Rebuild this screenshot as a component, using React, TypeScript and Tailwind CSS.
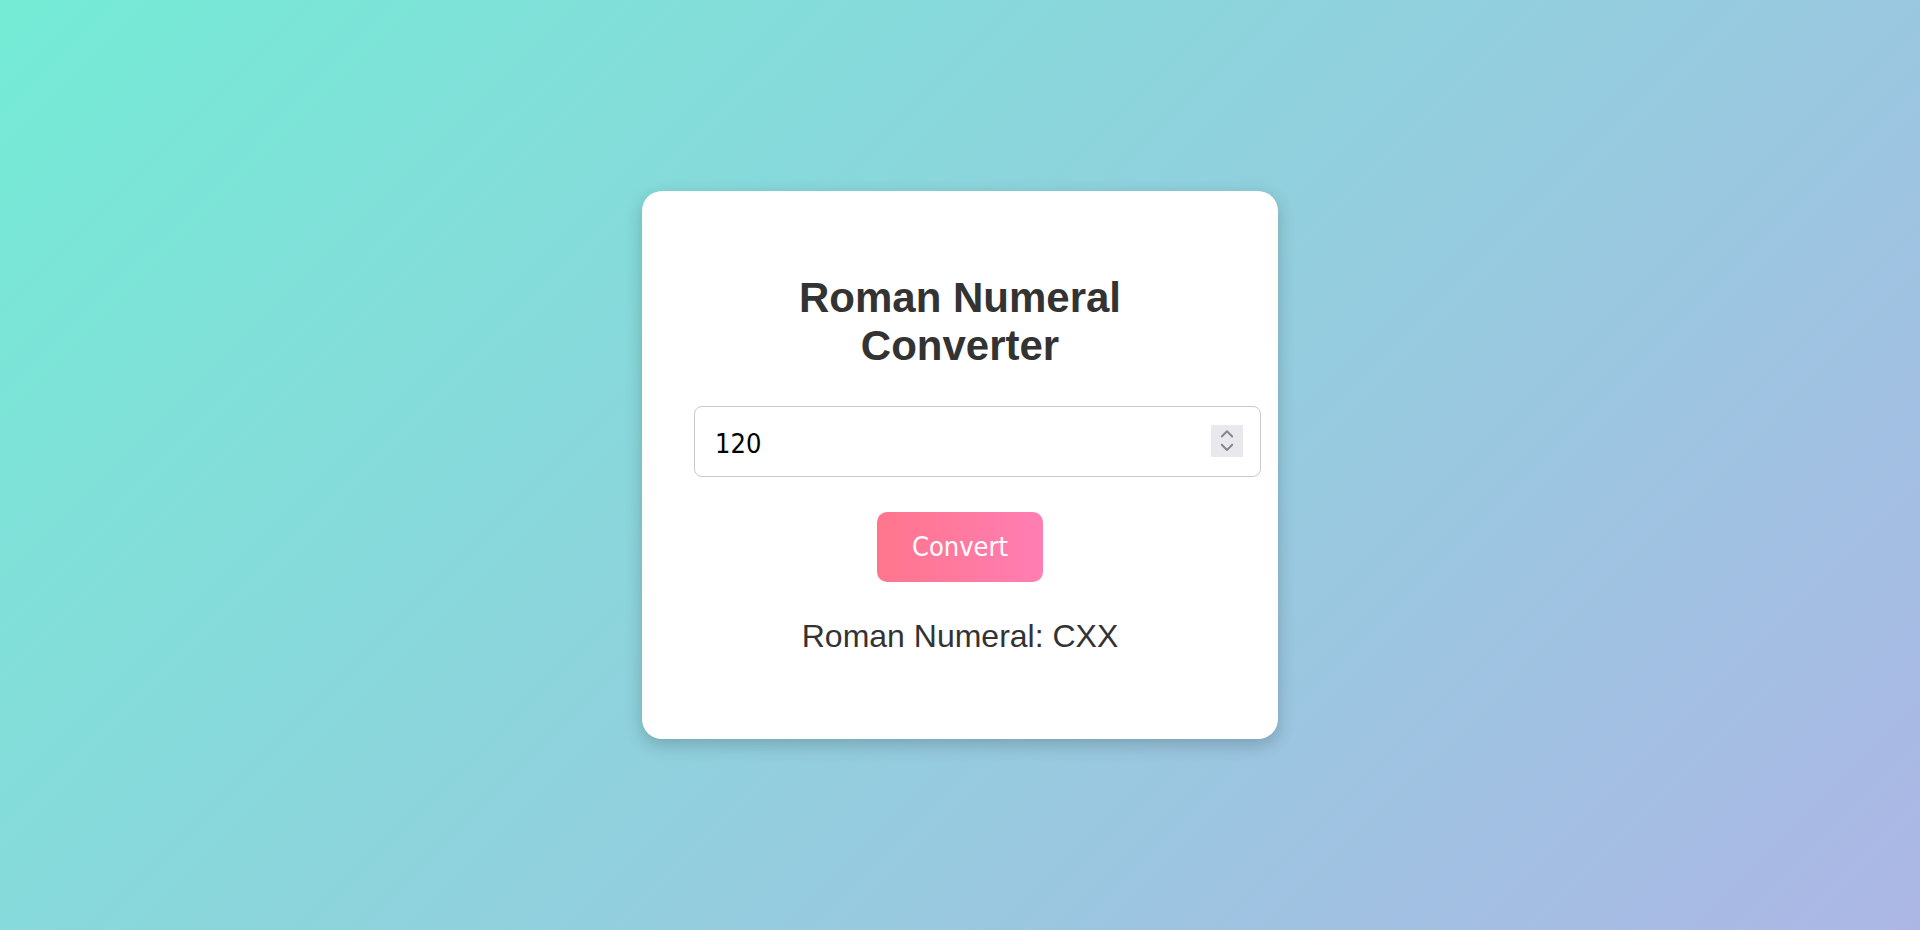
import React, { useState } from 'react';

const toRoman = (n: number) => {
  const table: [number, string][] = [
    [1000, 'M'], [900, 'CM'], [500, 'D'], [400, 'CD'],
    [100, 'C'], [90, 'XC'], [50, 'L'], [40, 'XL'],
    [10, 'X'], [9, 'IX'], [5, 'V'], [4, 'IV'], [1, 'I'],
  ];
  let out = '';
  for (const [v, s] of table) {
    while (n >= v) {
      out += s;
      n -= v;
    }
  }
  return out;
};

const Spinner: React.FC = () => (
  <div className="absolute right-[18px] top-[19px] w-[32px] h-[32px] bg-[#e9e9ed] pointer-events-none">
    <svg width="32" height="32" viewBox="0 0 32 32" fill="none">
      <path d="M10.8 11.5 L16 6.3 L21.2 11.5" stroke="#86868f" strokeWidth="2" strokeLinecap="round" strokeLinejoin="round" />
      <path d="M10.8 19.8 L16 25 L21.2 19.8" stroke="#86868f" strokeWidth="2" strokeLinecap="round" strokeLinejoin="round" />
    </svg>
  </div>
);

export default function App() {
  const [value, setValue] = useState('120');
  const [result, setResult] = useState('CXX');

  const handleConvert = () => {
    const n = parseInt(value, 10);
    if (!n || n < 1 || n > 3999) {
      setResult('Invalid number');
      return;
    }
    setResult(toRoman(n));
  };

  return (
    <div className="min-h-screen w-full flex items-center justify-center bg-[linear-gradient(135deg,#74ebd5,#acb6e5)] font-['Liberation_Sans',Arial,sans-serif]">
      <div className="w-[636px] bg-white rounded-[20px] shadow-[0_6px_18px_rgba(0,0,0,0.2)] px-[52px] pt-[52px] pb-[52px] text-center">
        <h1 className="mt-[31px] mb-[36px] text-[42px] leading-[48px] font-bold text-[#333]">
          Roman Numeral Converter
        </h1>

        <div className="relative w-[567px] h-[71px]">
          <input
            type="text"
            value={value}
            onChange={(e) => setValue(e.target.value)}
            className="w-full h-full border border-[#c9c9c9] rounded-[8px] pl-[20px] pr-[60px] pt-[4px] text-[27px] text-black bg-white outline-none font-['DejaVu_Sans_Condensed','DejaVu_Sans',sans-serif] font-stretch-condensed"
          />
          <Spinner />
        </div>

        <button
          onClick={handleConvert}
          className="mt-[35px] mx-auto flex items-center justify-center w-[166px] h-[70px] rounded-[10px] bg-[linear-gradient(to_right,#ff758c,#ff7eb3)] text-white text-[27px] font-['DejaVu_Sans_Condensed','DejaVu_Sans',sans-serif] font-stretch-condensed"
        >
          Convert
        </button>

        <p className="mt-[36px] mb-[32px] text-[32px] leading-[37px] text-[#333]">
          Roman Numeral: {result}
        </p>
      </div>
    </div>
  );
}
